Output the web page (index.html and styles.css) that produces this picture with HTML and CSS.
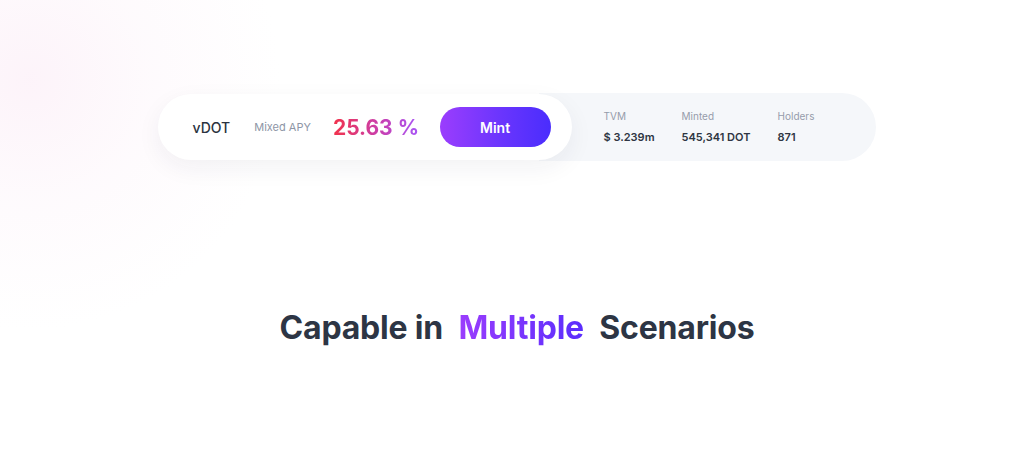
FILE: index.html
```html
<!DOCTYPE html>
<html lang="en">
<head>
<meta charset="utf-8">
<title>vDOT</title>
<link rel="stylesheet" href="styles.css">
</head>
<body>
<main class="page">
  <section class="stats">
    <div class="card">
      <span class="token">vDOT</span>
      <span class="apy-label">Mixed APY</span>
      <span class="apy">25.63 %</span>
      <button class="mint">Mint</button>
    </div>
    <div class="bar">
      <div class="stat stat-tvm">
        <span class="stat-label">TVM</span>
        <span class="stat-value">$ 3.239m</span>
      </div>
      <div class="stat stat-minted">
        <span class="stat-label">Minted</span>
        <span class="stat-value">545,341 DOT</span>
      </div>
      <div class="stat stat-holders">
        <span class="stat-label">Holders</span>
        <span class="stat-value">871</span>
      </div>
    </div>
  </section>
  <h2 class="heading">Capable in <span class="accent">Multiple</span> Scenarios</h2>
</main>
</body>
</html>
```
FILE: styles.css
```css
html, body {
  margin: 0;
  padding: 0;
}
body {
  width: 1024px;
  height: 452px;
  overflow: hidden;
  font-family: Inter, "Noto Sans", sans-serif;
  background:
    radial-gradient(circle at 30px 80px, rgba(251, 234, 245, 0.55) 0px, rgba(252, 242, 249, 0.35) 120px, rgba(255, 255, 255, 0) 250px),
    #ffffff;
}
.page {
  display: flex;
  flex-direction: column;
  align-items: center;
  padding: 93px 0 0 10px;
}
.stats {
  display: flex;
  align-items: center;
}
.card {
  position: relative;
  z-index: 2;
  display: flex;
  align-items: center;
  box-sizing: border-box;
  width: 414px;
  height: 66px;
  padding: 0 21px 0 35px;
  background: #ffffff;
  border-radius: 33px;
  box-shadow: 0 8px 24px rgba(30, 40, 70, 0.06);
}
.token {
  font-size: 14px;
  font-weight: 500;
  color: #2b3340;
  margin-right: 24px;
}
.apy-label {
  font-size: 11px;
  color: #8e96a6;
  margin-right: 22px;
}
.apy {
  font-size: 21px;
  font-weight: 700;
  background: linear-gradient(90deg, #f2334b 0%, #c83fb0 55%, #a855f7 100%);
  -webkit-background-clip: text;
  background-clip: text;
  color: transparent;
  margin-right: auto;
}
.mint {
  width: 111px;
  height: 40px;
  border: none;
  border-radius: 20px;
  background: linear-gradient(90deg, #9b3dfd 0%, #6a35fd 55%, #4a2dfd 100%);
  color: #ffffff;
  font-family: inherit;
  font-size: 14px;
  font-weight: 600;
}
.bar {
  display: flex;
  align-items: center;
  box-sizing: border-box;
  height: 68px;
  margin-left: -33px;
  padding-left: 65px;
  padding-right: 62px;
  background: #f5f7fa;
  border-radius: 0 34px 34px 0;
}
.stat {
  display: flex;
  flex-direction: column;
  gap: 8px;
}
.stat-tvm { width: 78px; }
.stat-minted { width: 96px; }
.stat-label {
  font-size: 10px;
  color: #959cab;
}
.stat-value {
  font-size: 11px;
  font-weight: 600;
  color: #2e3542;
}
.heading {
  margin: 147px 0 0 0;
  font-size: 32px;
  font-weight: 700;
  letter-spacing: -0.2px;
  color: #2d3544;
}
.accent {
  margin: 0 8px;
  background: linear-gradient(90deg, #9b3dfd 0%, #5a2dfd 100%);
  -webkit-background-clip: text;
  background-clip: text;
  color: transparent;
}
```
